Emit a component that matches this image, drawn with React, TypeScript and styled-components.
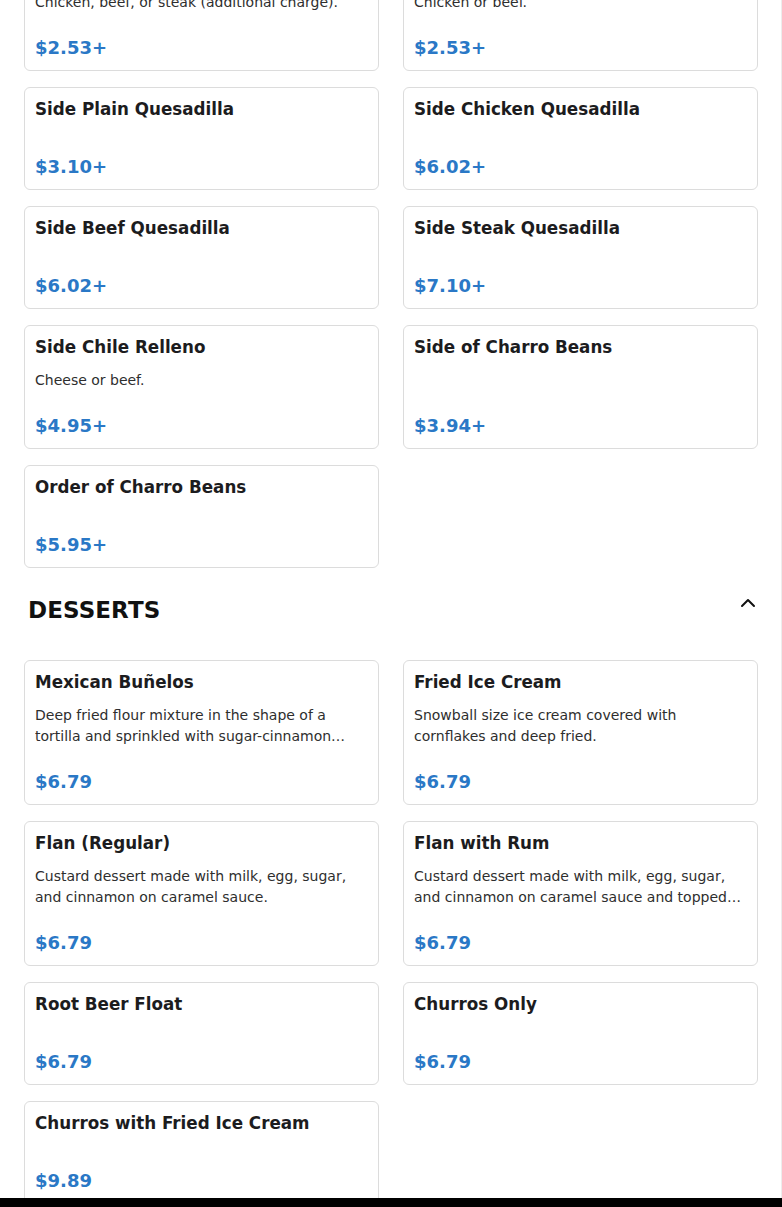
import React from "react";
import styled, { createGlobalStyle } from "styled-components";

const GlobalStyle = createGlobalStyle`
  html, body {
    margin: 0;
    padding: 0;
    background: #ffffff;
    overflow: hidden;
  }
  body {
    font-family: "DejaVu Sans", "Noto Sans", sans-serif;
    color: #1c1c1c;
  }
  * { box-sizing: border-box; }
`;

const Page = styled.main`
  padding: 0 24px 40px;
  margin-top: -53px;
`;

const Grid = styled.section`
  display: grid;
  grid-template-columns: 1fr 1fr;
  column-gap: 24px;
  row-gap: 16px;
  align-items: stretch;
`;

const Card = styled.article`
  display: flex;
  flex-direction: column;
  border: 1px solid #dcdcdc;
  border-radius: 6px;
  padding: 10px;
  background: #fff;
`;

const Title = styled.h3`
  margin: 0 0 10px;
  font-size: 16.75px;
  line-height: 23px;
  padding-bottom: 1px;
  font-weight: 700;
  color: #1c1c1e;
`;

const Desc = styled.p`
  margin: 0;
  font-size: 14px;
  line-height: 21px;
  color: #2e2e2e;
  display: -webkit-box;
  -webkit-line-clamp: 2;
  -webkit-box-orient: vertical;
  overflow: hidden;
`;

const Price = styled.div`
  margin-top: auto;
  padding-top: 22px;
  font-size: 18px;
  line-height: 25px;
  font-weight: 700;
  color: #2a78c6;
`;

const CategoryHeader = styled.header`
  display: flex;
  justify-content: space-between;
  align-items: flex-start;
  margin: 26px 0 33px;
  padding-left: 4px;
`;

const CategoryTitle = styled.h2`
  margin: 0;
  font-size: 23px;
  line-height: 33px;
  font-weight: 700;
  letter-spacing: 0.1px;
  color: #111;
`;

const CollapseButton = styled.button`
  width: 20px;
  height: 20px;
  padding: 0;
  border: 0;
  background: transparent;
  display: flex;
  align-items: center;
  justify-content: center;
  cursor: pointer;
`;

const BottomBar = styled.div`
  position: fixed;
  left: 0;
  right: 0;
  bottom: 0;
  height: 9px;
  background: #000;
`;

const EdgeLine = styled.div`
  position: fixed;
  top: 0;
  right: 0;
  bottom: 0;
  width: 1px;
  background: #ededed;
`;

type Item = { name: string; desc?: string; price: string };

const sides: Item[] = [
  { name: "Side Taco", desc: "Chicken, beef, or steak (additional charge).", price: "$2.53+" },
  { name: "Side Enchilada", desc: "Chicken or beef.", price: "$2.53+" },
  { name: "Side Plain Quesadilla", price: "$3.10+" },
  { name: "Side Chicken Quesadilla", price: "$6.02+" },
  { name: "Side Beef Quesadilla", price: "$6.02+" },
  { name: "Side Steak Quesadilla", price: "$7.10+" },
  { name: "Side Chile Relleno", desc: "Cheese or beef.", price: "$4.95+" },
  { name: "Side of Charro Beans", price: "$3.94+" },
  { name: "Order of Charro Beans", price: "$5.95+" },
];

const desserts: Item[] = [
  {
    name: "Mexican Buñelos",
    desc: "Deep fried flour mixture in the shape of a tortilla and sprinkled with sugar-cinnamon…",
    price: "$6.79",
  },
  {
    name: "Fried Ice Cream",
    desc: "Snowball size ice cream covered with cornflakes and deep fried.",
    price: "$6.79",
  },
  {
    name: "Flan (Regular)",
    desc: "Custard dessert made with milk, egg, sugar, and cinnamon on caramel sauce.",
    price: "$6.79",
  },
  {
    name: "Flan with Rum",
    desc: "Custard dessert made with milk, egg, sugar, and cinnamon on caramel sauce and topped with rum.",
    price: "$6.79",
  },
  { name: "Root Beer Float", price: "$6.79" },
  { name: "Churros Only", price: "$6.79" },
  { name: "Churros with Fried Ice Cream", price: "$9.89" },
];

const MenuCard = ({ item }: { item: Item }) => (
  <Card>
    <Title>{item.name}</Title>
    {item.desc && <Desc>{item.desc}</Desc>}
    <Price>{item.price}</Price>
  </Card>
);

const ChevronUp = () => (
  <svg width="20" height="20" viewBox="0 0 20 20" fill="none">
    <polyline
      points="4,12 10,6 16,12"
      stroke="#111"
      strokeWidth="2"
      strokeLinecap="round"
      strokeLinejoin="round"
    />
  </svg>
);

export default function App() {
  return (
    <>
      <GlobalStyle />
      <Page>
        <Grid>
          {sides.map((it) => (
            <MenuCard key={it.name} item={it} />
          ))}
        </Grid>
        <CategoryHeader>
          <CategoryTitle>DESSERTS</CategoryTitle>
          <CollapseButton aria-label="Collapse">
            <ChevronUp />
          </CollapseButton>
        </CategoryHeader>
        <Grid>
          {desserts.map((it) => (
            <MenuCard key={it.name} item={it} />
          ))}
        </Grid>
      </Page>
      <EdgeLine />
      <BottomBar />
    </>
  );
}
